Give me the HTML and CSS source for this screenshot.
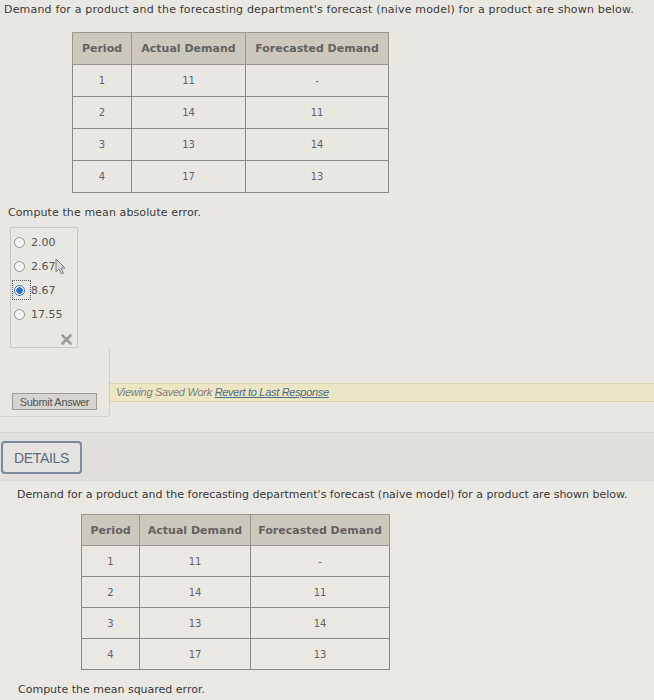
FILE: index.html
```html
<!DOCTYPE html>
<html>
<head>
<meta charset="utf-8">
<link rel="stylesheet" href="styles.css">
</head>
<body>
<div class="q1">
  <p class="intro wide">Demand for a product and the forecasting department's forecast (naive model) for a product are shown below.</p>
  <table class="data t1">
    <thead><tr><th class="c1">Period</th><th class="c2">Actual Demand</th><th class="c3">Forecasted Demand</th></tr></thead>
    <tbody>
      <tr><td>1</td><td>11</td><td>-</td></tr>
      <tr><td>2</td><td>14</td><td>11</td></tr>
      <tr><td>3</td><td>13</td><td>14</td></tr>
      <tr><td>4</td><td>17</td><td>13</td></tr>
    </tbody>
  </table>
  <p class="prompt">Compute the mean absolute error.</p>
  <div class="choices">
    <div class="choice"><span class="radio"></span><span class="label">2.00</span></div>
    <div class="choice"><span class="radio"></span><span class="label">2.67</span>
      <svg class="cursor" width="11" height="17" viewBox="0 0 11 17"><path d="M1 1 L1 14 L4 11 L6.5 16 L8.5 15 L6 10 L10 10 Z" fill="#d9d9d9" stroke="#7a7a7a" stroke-width="1"/></svg>
    </div>
    <div class="choice"><span class="focus"><span class="radio checked"></span></span><span class="label">8.67</span></div>
    <div class="choice"><span class="radio"></span><span class="label">17.55</span></div>
    <div class="mark"><svg width="11" height="11" viewBox="0 0 11 11"><path d="M1.5 1.5 L9.5 9.5 M9.5 1.5 L1.5 9.5" stroke="#9c9c9c" stroke-width="2.6" stroke-linecap="round"/></svg></div>
  </div>
  <div class="submit-row">
    <div class="submit-cell"><button class="submit">Submit Answer</button></div>
    <div class="saved-bar"><span class="saved">Viewing Saved Work</span> <a class="revert">Revert to Last Response</a></div>
  </div>
</div>
<div class="details-band">
  <button class="details">DETAILS</button>
</div>
<div class="q2">
  <p class="intro">Demand for a product and the forecasting department's forecast (naive model) for a product are shown below.</p>
  <table class="data t2">
    <thead><tr><th class="c1">Period</th><th class="c2">Actual Demand</th><th class="c3">Forecasted Demand</th></tr></thead>
    <tbody>
      <tr><td>1</td><td>11</td><td>-</td></tr>
      <tr><td>2</td><td>14</td><td>11</td></tr>
      <tr><td>3</td><td>13</td><td>14</td></tr>
      <tr><td>4</td><td>17</td><td>13</td></tr>
    </tbody>
  </table>
  <p class="prompt">Compute the mean squared error.</p>
</div>
</body>
</html>
```

FILE: styles.css
```css
html, body {
  margin: 0;
  padding: 0;
}
body {
  width: 654px;
  height: 700px;
  overflow: hidden;
  background: #e9e7e2;
  font-family: "DejaVu Sans", Verdana, sans-serif;
  color: #3a3a3a;
}
.q1 {
  padding: 3px 0 0 4px;
  height: 429px;
}
.intro {
  margin: 0;
  font-size: 11px;
  line-height: 14px;
  white-space: nowrap;
}
.intro.wide {
  letter-spacing: 0.18px;
}
.data {
  border-collapse: collapse;
  border: 1px solid #8d8b87;
  font-size: 10px;
  color: #636363;
}
.data th {
  background: #cdc8be;
  color: #626262;
  font-weight: bold;
  font-size: 11px;
  border: 1px solid #9a9791;
  padding: 0;
  text-align: center;
}
.data td {
  border: 1px solid #8d8b87;
  padding: 0;
  text-align: center;
}
.t1 {
  margin: 15px 0 0 68px;
}
.t1 th, .t1 td {
  height: 31px;
}
.t1 .c1 { width: 58px; }
.t1 .c2 { width: 113px; }
.t1 .c3 { width: 142px; }
.prompt {
  margin: 13px 0 0 4px;
  font-size: 11px;
  line-height: 14px;
  letter-spacing: 0.1px;
}
.choices {
  margin: 7px 0 0 6px;
  width: 68px;
  height: 121px;
  box-sizing: border-box;
  border: 1px solid #cac8c2;
  padding: 2px 0 0 3px;
}
.choice {
  position: relative;
  display: flex;
  align-items: center;
  height: 24px;
  font-size: 11px;
  color: #555;
}
.radio {
  display: inline-block;
  width: 11px;
  height: 11px;
  box-sizing: border-box;
  border-radius: 50%;
  border: 1px solid #8f8f8f;
  background: #f6f6f6;
  margin-right: 6px;
}
.radio.checked {
  border: 1px solid #3a74d0;
  background: radial-gradient(circle, #2e6fd8 0 3px, #ffffff 3.5px);
}
.focus {
  position: relative;
  display: inline-flex;
}
.focus::after {
  content: "";
  position: absolute;
  left: -2px;
  top: -5px;
  width: 19px;
  height: 20px;
  box-sizing: border-box;
  border: 1px dotted #5a5a5a;
}
.cursor {
  position: absolute;
  left: 41px;
  top: 4px;
}
.mark {
  display: flex;
  justify-content: flex-end;
  padding-right: 5px;
  margin-top: 8px;
}
.submit-row {
  display: flex;
  margin: 0 0 0 -4px;
}
.submit-cell {
  width: 110px;
  height: 69px;
  box-sizing: border-box;
  border-right: 1px solid #d3d1cb;
  border-bottom: 1px solid #d3d1cb;
  border-bottom-right-radius: 4px;
  padding: 45px 0 0 12px;
}
.submit {
  display: block;
  width: 85px;
  height: 17px;
  padding: 0;
  font-family: "Liberation Sans", Arial, sans-serif;
  font-size: 11px;
  letter-spacing: -0.3px;
  color: #555;
  background: #d6d4d0;
  border: 1px solid #9e9c98;
  border-radius: 0;
}
.saved-bar {
  flex: 1;
  margin-top: 35px;
  height: 19px;
  box-sizing: border-box;
  background: #ebe6c3;
  border-top: 1px solid #d8d3ad;
  border-bottom: 1px solid #d8d3ad;
  padding-left: 6px;
  font-family: "Liberation Sans", Arial, sans-serif;
  font-style: italic;
  font-size: 11px;
  line-height: 17px;
  letter-spacing: -0.3px;
}
.saved {
  color: #808080;
}
.revert {
  color: #4c6a86;
  text-decoration: underline;
}
.details-band {
  height: 48px;
  box-sizing: border-box;
  background: #e0dfdb;
  border-top: 1px solid #d4d3cf;
  padding: 8px 0 0 1px;
}
.details {
  display: block;
  width: 81px;
  height: 33px;
  padding: 0;
  background: #e4e3df;
  border: 2px solid #7d889c;
  border-radius: 4px;
  font-family: "Liberation Sans", Arial, sans-serif;
  font-size: 14px;
  letter-spacing: -0.3px;
  color: #5a6984;
}
.q2 {
  height: 220px;
  box-sizing: border-box;
  background: #eae8e3;
  border-top: 1px solid #dcdad6;
  padding: 7px 0 0 17px;
}
.t2 {
  margin: 12px 0 0 64px;
}
.t2 th, .t2 td {
  height: 30px;
}
.t2 .c1 { width: 57px; }
.t2 .c2 { width: 110px; }
.t2 .c3 { width: 138px; }
.q2 .prompt {
  margin: 13px 0 0 1px;
  letter-spacing: 0;
}
```
